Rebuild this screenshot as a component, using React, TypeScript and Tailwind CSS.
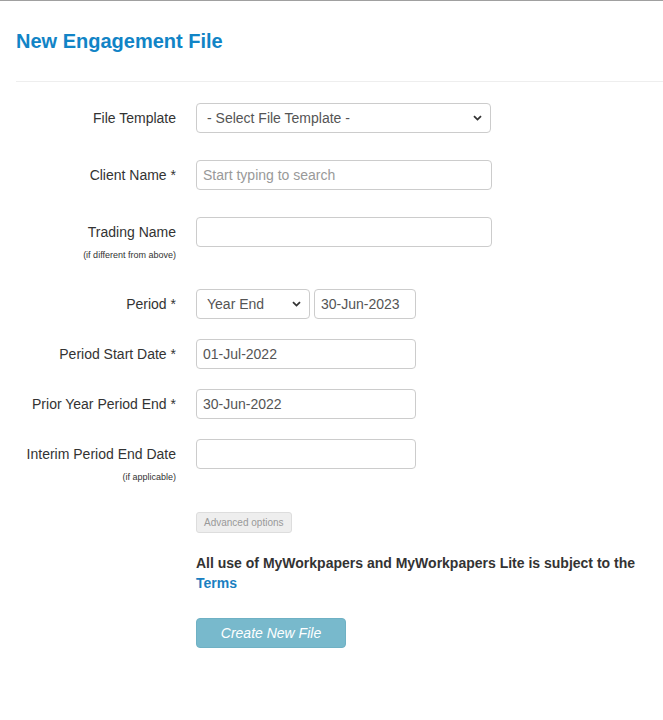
import React from 'react';

const Chevron = () => (
  <svg
    className="pointer-events-none absolute right-[9px] top-1/2 -translate-y-1/2"
    width="9"
    height="6"
    viewBox="0 0 9 6"
    fill="none"
  >
    <path d="M1 1.2 L4.5 4.6 L8 1.2" stroke="#333" strokeWidth="1.8" />
  </svg>
);

const inputCls =
  'h-[30px] rounded-[4px] border border-[#ccc] bg-white px-[6px] text-[14px] text-[#555] placeholder:text-[#999] outline-none';

const Label = ({ text, hint }: { text: string; hint?: string }) => (
  <div className="w-[160px] shrink-0 text-right">
    <div className="h-[30px] text-[14px] leading-[30px] text-[#333]">{text}</div>
    {hint && <div className="mt-[2px] text-[9px] leading-[13px] text-[#333]">{hint}</div>}
  </div>
);

export default function App() {
  return (
    <div className="min-h-[720px] border-t border-[#a0a0a0] bg-white font-['Liberation_Sans',Arial,sans-serif]">
      <div className="pl-4">
        <h1 className="pt-[26px] pb-[26px] text-[20px] font-bold leading-[28px] text-[#1184c6]">
          New Engagement File
        </h1>
        <div className="border-t border-[#eee]" />

        <form className="flex flex-col" onSubmit={(e) => e.preventDefault()}>
          <div className="mt-[21px] flex gap-5">
            <Label text="File Template" />
            <div className="relative w-[295px]">
              <select className={`${inputCls} w-full appearance-none pl-[10px]`} defaultValue="">
                <option value="">- Select File Template -</option>
              </select>
              <Chevron />
            </div>
          </div>

          <div className="mt-[27px] flex gap-5">
            <Label text="Client Name *" />
            <input className={`${inputCls} w-[296px]`} placeholder="Start typing to search" />
          </div>

          <div className="mt-[27px] flex gap-5">
            <Label text="Trading Name" hint="(if different from above)" />
            <input className={`${inputCls} w-[296px]`} />
          </div>

          <div className="mt-[27px] flex gap-5">
            <Label text="Period *" />
            <div className="flex gap-[4px]">
              <div className="relative w-[114px]">
                <select className={`${inputCls} w-full appearance-none pl-[10px]`} defaultValue="ye">
                  <option value="ye">Year End</option>
                </select>
                <Chevron />
              </div>
              <input className={`${inputCls} w-[102px]`} defaultValue="30-Jun-2023" />
            </div>
          </div>

          <div className="mt-5 flex gap-5">
            <Label text="Period Start Date *" />
            <input className={`${inputCls} w-[220px]`} defaultValue="01-Jul-2022" />
          </div>

          <div className="mt-5 flex gap-5">
            <Label text="Prior Year Period End *" />
            <input className={`${inputCls} w-[220px]`} defaultValue="30-Jun-2022" />
          </div>

          <div className="mt-5 flex gap-5">
            <Label text="Interim Period End Date" hint="(if applicable)" />
            <input className={`${inputCls} w-[220px]`} />
          </div>

          <div className="ml-[180px] mt-[28px] flex flex-col items-start">
            <button
              type="button"
              className="h-[21px] rounded-[3px] border border-[#ddd] bg-[#eee] px-[7px] text-[10px] text-[#999]"
            >
              Advanced options
            </button>

            <p className="mt-5 max-w-[450px] text-[14px] font-bold leading-[20px] text-[#333]">
              All use of MyWorkpapers and MyWorkpapers Lite is subject to the{' '}
              <a href="#" className="text-[#1a7fc1]">
                Terms
              </a>
            </p>

            <button
              type="submit"
              className="mt-[25px] h-[30px] w-[150px] rounded-[4px] border border-[#6fb1c4] bg-[#78b9cc] text-[14px] italic text-white"
            >
              Create New File
            </button>
          </div>
        </form>
      </div>
    </div>
  );
}
